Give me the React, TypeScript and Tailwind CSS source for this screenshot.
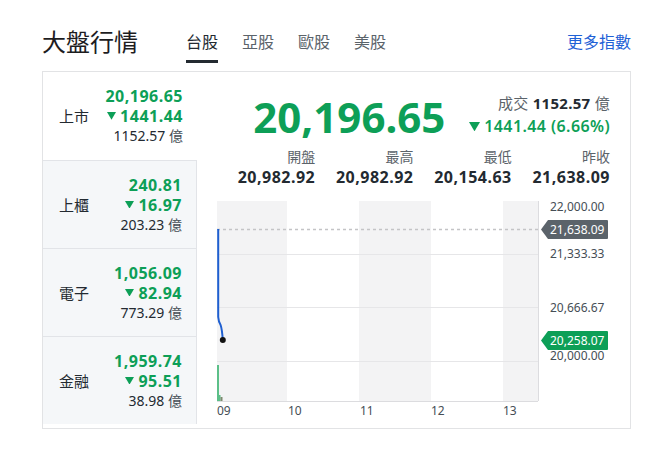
import React from "react";

const F = "font-['Noto_Sans','Noto_Sans_CJK_TC',sans-serif]";

function Down({ size = 9 }: { size?: number }) {
  return (
    <svg width={size} height={size * 0.85} viewBox="0 0 10 8.5" className="inline-block">
      <path d="M0 0 L10 0 L5 8.5 Z" fill="#0d9f57" />
    </svg>
  );
}

const rows = [
  { name: "上市", v: "20,196.65", c: "1441.44", amt: "1152.57", active: true },
  { name: "上櫃", v: "240.81", c: "16.97", amt: "203.23" },
  { name: "電子", v: "1,056.09", c: "82.94", amt: "773.29" },
  { name: "金融", v: "1,959.74", c: "95.51", amt: "38.98" },
];

const stats = [
  ["開盤", "20,982.92"],
  ["最高", "20,982.92"],
  ["最低", "20,154.63"],
  ["昨收", "21,638.09"],
];

function Chart() {
  const txt = { fontFamily: "'Noto Sans', sans-serif", fontSize: 12 };
  return (
    <svg width={393} height={225} viewBox="0 0 393 225" className="block">
      <rect x={0} y={6} width={70} height={200} fill="#f3f3f4" />
      <rect x={142} y={6} width={72} height={200} fill="#f3f3f4" />
      <rect x={286} y={6} width={35} height={200} fill="#f3f3f4" />
      {[59, 112, 166].map((y) => (
        <line key={y} x1={0} x2={321} y1={y + 0.5} y2={y + 0.5} stroke="#e6e6e8" strokeWidth={1} />
      ))}
      <line x1={321.5} x2={321.5} y1={6} y2={206} stroke="#dcdcdf" />
      <line x1={0} x2={321} y1={206.5} y2={206.5} stroke="#dcdcdf" />
      <rect x={0} y={170} width={2} height={36} fill="#5cbf88" />
      <rect x={2} y={200} width={1.5} height={6} fill="#5cbf88" />
      <rect x={3.5} y={202} width={2} height={4} fill="#7d8a6f" />
      <line x1={0} x2={324} y1={34.5} y2={34.5} stroke="#c4c4c6" strokeWidth={1.5} strokeDasharray="3 3" />
      <path d="M1.2 34 L1.2 122 Q1.6 127 3.6 130 Q5 134 5.8 145" stroke="#1f5fd0" strokeWidth={2} fill="none" />
      <circle cx={5.8} cy={145} r={3} fill="#111" />
      <text x={333} y={15.5} fill="#464e56" {...txt}>22,000.00</text>
      <text x={333} y={62.5} fill="#464e56" {...txt}>21,333.33</text>
      <text x={333} y={116.5} fill="#464e56" {...txt}>20,666.67</text>
      <text x={333} y={164.5} fill="#464e56" {...txt}>20,000.00</text>
      <path d="M324 34.5 L331 25 L390 25 Q391 25 391 26 L391 43 Q391 44 390 44 L331 44 Z" fill="#5b636a" />
      <text x={333} y={39} fill="#fff" {...txt}>21,638.09</text>
      <path d="M324 145.5 L331 136 L390 136 Q391 136 391 137 L391 154 Q391 155 390 155 L331 155 Z" fill="#0d9f57" />
      <text x={333} y={150} fill="#fff" {...txt}>20,258.07</text>
      <text x={0} y={219.5} fill="#464e56" {...txt}>09</text>
      <text x={71} y={219.5} fill="#464e56" {...txt}>10</text>
      <text x={143} y={219.5} fill="#464e56" {...txt}>11</text>
      <text x={214} y={219.5} fill="#464e56" {...txt}>12</text>
      <text x={286} y={219.5} fill="#464e56" {...txt}>13</text>
    </svg>
  );
}

export default function App() {
  return (
    <div className={`w-[645px] h-[460px] bg-white text-[#232a31] ${F}`}>
      <div className="ml-[42px] w-[589px] flex items-start pt-[26px]">
        <div className="text-[24px] leading-[32px] text-[#1d1d1f]">大盤行情</div>
        <div className="ml-[48px] flex gap-[24px]">
          {["台股", "亞股", "歐股", "美股"].map((t, i) => (
            <div
              key={t}
              className={
                i === 0
                  ? "text-[16px] leading-[24px] pt-[4px] pb-[6px] border-b-[3px] border-[#232a31] text-[#232a31]"
                  : "text-[16px] leading-[24px] pt-[4px] pb-[6px] border-b-[3px] border-transparent text-[#5b636a]"
              }
            >
              {t}
            </div>
          ))}
        </div>
        <div className="ml-auto text-[16px] leading-[24px] pt-[4px] text-[#1f62d6]">更多指數</div>
      </div>
      <div className="mt-[8px] ml-[42px] w-[589px] h-[358px] border border-[#e2e3e5] flex">
        <div className="w-[154px] flex flex-col">
          {rows.map((r) => (
            <div
              key={r.name}
              className={
                r.active
                  ? "h-[88px] flex items-center justify-between pl-[16px] pr-[14px] bg-white"
                  : "h-[88px] flex items-center justify-between pl-[16px] pr-[14px] bg-[#f5f7f9] border-t border-r border-[#e2e4e8]"
              }
            >
              <div className="text-[15px] leading-[20px] text-[#232a31]">{r.name}</div>
              <div className="flex flex-col items-end">
                <div className="text-[16px] leading-[20px] tracking-[0.5px] font-bold text-[#0d9f57]">{r.v}</div>
                <div className="text-[16px] leading-[20px] tracking-[0.5px] font-bold text-[#0d9f57] flex items-center gap-[4px]">
                  <Down />
                  {r.c}
                </div>
                <div className="text-[14px] leading-[20px] text-[#232a31]">
                  {r.amt} <span className="text-[#464e56]">億</span>
                </div>
              </div>
            </div>
          ))}
        </div>
        <div className="flex-1 flex flex-col pl-[20px] pr-[20px]">
          <div className="flex items-start justify-end pt-[20px] h-[75px]">
            <div className="text-[42px] leading-[50px] font-bold text-[#0d9f57]">20,196.65</div>
            <div className="ml-[24px] flex flex-col items-end">
              <div className="text-[15px] leading-[23px] tracking-[0.3px]">
                <span className="text-[#5b636a]">成交 </span>
                <span className="font-bold text-[#232a31]">1152.57</span>
                <span className="text-[#5b636a]"> 億</span>
              </div>
              <div className="text-[16px] leading-[23px] tracking-[0.4px] font-semibold text-[#0d9f57] flex items-center gap-[4px]">
                <Down size={11} />
                1441.44 (6.66%)
              </div>
            </div>
          </div>
          <div className="grid grid-cols-4">
            {stats.map(([l, v]) => (
              <div key={l} className="flex flex-col items-end">
                <div className="text-[14px] leading-[20px] text-[#5b636a]">{l}</div>
                <div className="text-[16px] leading-[20px] tracking-[0.5px] font-bold text-[#232a31]">{v}</div>
              </div>
            ))}
          </div>
          <div className="mt-[8px]">
            <Chart />
          </div>
        </div>
      </div>
    </div>
  );
}
